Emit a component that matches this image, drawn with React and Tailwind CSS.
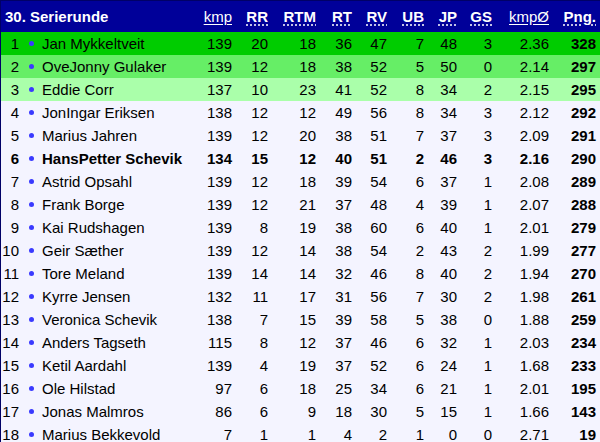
import React from 'react';

const rows = [
  [1, 'Jan Mykkeltveit', 139, 20, 18, 36, 47, 7, 48, 3, '2.36', 328],
  [2, 'OveJonny Gulaker', 139, 12, 18, 38, 52, 5, 50, 0, '2.14', 297],
  [3, 'Eddie Corr', 137, 10, 23, 41, 52, 8, 34, 2, '2.15', 295],
  [4, 'JonIngar Eriksen', 138, 12, 12, 49, 56, 8, 34, 3, '2.12', 292],
  [5, 'Marius Jahren', 139, 12, 20, 38, 51, 7, 37, 3, '2.09', 291],
  [6, 'HansPetter Schevik', 134, 15, 12, 40, 51, 2, 46, 3, '2.16', 290],
  [7, 'Astrid Opsahl', 139, 12, 18, 39, 54, 6, 37, 1, '2.08', 289],
  [8, 'Frank Borge', 139, 12, 21, 37, 48, 4, 39, 1, '2.07', 288],
  [9, 'Kai Rudshagen', 139, 8, 19, 38, 60, 6, 40, 1, '2.01', 279],
  [10, 'Geir Sæther', 139, 12, 14, 38, 54, 2, 43, 2, '1.99', 277],
  [11, 'Tore Meland', 139, 14, 14, 32, 46, 8, 40, 2, '1.94', 270],
  [12, 'Kyrre Jensen', 132, 11, 17, 31, 56, 7, 30, 2, '1.98', 261],
  [13, 'Veronica Schevik', 138, 7, 15, 39, 58, 5, 38, 0, '1.88', 259],
  [14, 'Anders Tagseth', 115, 8, 12, 37, 46, 6, 32, 1, '2.03', 234],
  [15, 'Ketil Aardahl', 139, 4, 19, 37, 52, 6, 24, 1, '1.68', 233],
  [16, 'Ole Hilstad', 97, 6, 18, 25, 34, 6, 21, 1, '2.01', 195],
  [17, 'Jonas Malmros', 86, 6, 9, 18, 30, 5, 15, 1, '1.66', 143],
  [18, 'Marius Bekkevold', 7, 1, 1, 4, 2, 1, 0, 0, '2.71', 19],
];

// widths of the numeric columns, measured from right edge to right edge
const colW = ['w-[40px]', 'w-[36px]', 'w-[48px]', 'w-[36px]', 'w-[35px]', 'w-[37px]', 'w-[33px]', 'w-[35px]', 'w-[57px]', 'w-[47px]'];

const headers = [
  { t: 'kmp', link: true },
  { t: 'RR' },
  { t: 'RTM' },
  { t: 'RT' },
  { t: 'RV' },
  { t: 'UB' },
  { t: 'JP' },
  { t: 'GS' },
  { t: 'kmpØ', link: true },
  { t: 'Png.' },
];

const rowBg = (rank) => {
  if (rank === 1) return 'bg-[#00cc00]';
  if (rank === 2) return 'bg-[#66ee66]';
  if (rank === 3) return 'bg-[#aaffaa]';
  return 'bg-[#f4f4ff]';
};

export default function App() {
  return (
    <div className="w-[600px] h-[442px] overflow-hidden bg-white text-[15px] leading-none text-black" style={{ fontFamily: '"Liberation Sans", Arial, sans-serif' }}>
      <div className="border-l border-[#000066]">
        <div className="flex items-center h-[32px] bg-[#000099] border-t border-[#000066] text-white">
          <div className="w-[191px] pl-[4px] font-bold">30. Serierunde</div>
          {headers.map((h, i) => (
            <div key={h.t} className={`${colW[i]} text-right`}>
              {h.link ? (
                <span className="underline underline-offset-2">{h.t}</span>
              ) : (
                <span className="font-bold underline decoration-dotted underline-offset-[3px]">{h.t}</span>
              )}
            </div>
          ))}
        </div>
        {rows.map((r) => {
          const [rank, name, ...nums] = r;
          const bold = rank === 6;
          return (
            <div key={rank} className={`flex items-center h-[23px] ${rowBg(rank)} ${bold ? 'font-bold' : ''}`}>
              <div className="w-[18px] text-right">{rank}</div>
              <div className="w-[23px] flex items-center pl-[10px]">
                <span className="block w-[5px] h-[5px] rounded-full bg-[#3a3aff]" />
              </div>
              <div className="w-[150px] whitespace-nowrap">{name}</div>
              {nums.map((n, i) => (
                <div key={i} className={`${colW[i]} text-right ${i === 9 ? 'font-bold' : ''}`}>{n}</div>
              ))}
            </div>
          );
        })}
      </div>
    </div>
  );
}
